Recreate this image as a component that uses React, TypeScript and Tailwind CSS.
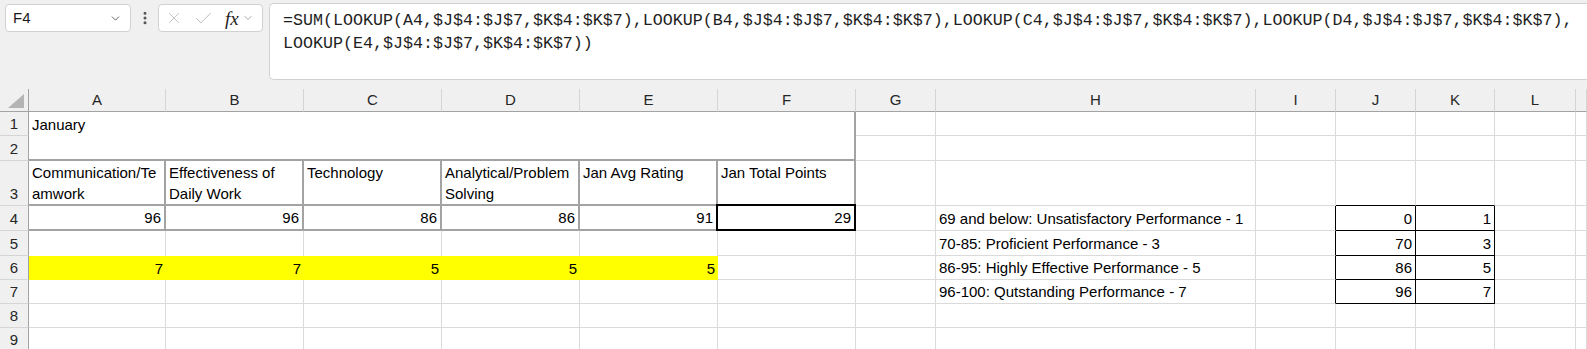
import { Check, ChevronDown, EllipsisVertical, X } from "lucide-react";

const COLS = ["A", "B", "C", "D", "E", "F", "G", "H", "I", "J", "K", "L", ""];
const ROWS = [1, 2, 3, 4, 5, 6, 7, 8, 9];

const LINE1 =
    "=SUM(LOOKUP(A4,$J$4:$J$7,$K$4:$K$7),LOOKUP(B4,$J$4:$J$7,$K$4:$K$7),LOOKUP(C4,$J$4:$J$7,$K$4:$K$7),LOOKUP(D4,$J$4:$J$7,$K$4:$K$7),";
const LINE2 = "LOOKUP(E4,$J$4:$J$7,$K$4:$K$7))";

type Cell = { text?: string[]; num?: boolean };

const data: Record<string, Cell> = {
    A1: { text: ["January"] },
    A3: { text: ["Communication/Te", "amwork"] },
    B3: { text: ["Effectiveness of", "Daily Work"] },
    C3: { text: ["Technology"] },
    D3: { text: ["Analytical/Problem", "Solving"] },
    E3: { text: ["Jan Avg Rating"] },
    F3: { text: ["Jan Total Points"] },
    A4: { text: ["96"], num: true },
    B4: { text: ["96"], num: true },
    C4: { text: ["86"], num: true },
    D4: { text: ["86"], num: true },
    E4: { text: ["91"], num: true },
    F4: { text: ["29"], num: true },
    H4: { text: ["69 and below: Unsatisfactory Performance - 1"] },
    H5: { text: ["70-85: Proficient Performance - 3"] },
    H6: { text: ["86-95: Highly Effective Performance - 5"] },
    H7: { text: ["96-100: Qutstanding Performance - 7"] },
    J4: { text: ["0"], num: true },
    K4: { text: ["1"], num: true },
    J5: { text: ["70"], num: true },
    K5: { text: ["3"], num: true },
    J6: { text: ["86"], num: true },
    K6: { text: ["5"], num: true },
    J7: { text: ["96"], num: true },
    K7: { text: ["7"], num: true },
    A6: { text: ["7"], num: true },
    B6: { text: ["7"], num: true },
    C6: { text: ["5"], num: true },
    D6: { text: ["5"], num: true },
    E6: { text: ["5"], num: true },
};

const plain = "border-r border-b border-r-[#dadada] border-b-[#dadada]";
const thick = "border-r-2 border-b-2 border-r-[#a3a3a3] border-b-[#a3a3a3]";

const cellLook = (c: string, r: number) => {
    const inBlock = ["A", "B", "C", "D", "E"].includes(c);
    if (r === 1 && inBlock) return "bg-white";
    if (r === 1 && c === "F") return "border-r-2 border-r-[#a3a3a3]";
    if (r === 2 && inBlock) return "border-b-2 border-b-[#a3a3a3]";
    if (r === 2 && c === "F") return thick;
    if ((r === 3 || r === 4) && (inBlock || c === "F")) return thick;
    if (r === 5 && inBlock) return "border-r border-r-[#dadada]";
    if (r === 6 && inBlock) return "bg-[#ffff00]";
    if (r === 3 && (c === "J" || c === "K")) return "border-r border-b border-r-[#dadada] border-b-black";
    if (r >= 4 && r <= 7 && c === "I") return "border-r border-b border-r-black border-b-[#dadada]";
    if (r >= 4 && r <= 7 && (c === "J" || c === "K")) return "border-r border-b border-r-black border-b-black";
    return plain;
};

const FormulaBar = () => (
    <div className="h-[89px] bg-[#f0f0f0] flex items-start">
        <div className="ml-[5px] mt-[4px] w-[126px] h-[28px] bg-white border border-[#d1d1d1] rounded-[4px] flex items-center justify-between pl-[7px] pr-[8px] text-[15px] text-[#1b1b1b]">
            <span>F4</span>
            <ChevronDown size={13} strokeWidth={1.5} className="text-[#444]" />
        </div>
        <div className="w-[27px] h-[28px] mt-[4px] flex items-center justify-center">
            <EllipsisVertical size={16} strokeWidth={2.5} className="text-[#555]" />
        </div>
        <div className="mt-[4px] w-[105px] h-[28px] bg-white border border-[#d1d1d1] rounded-[4px] flex items-center pl-[6px]">
            <X size={18} strokeWidth={1.1} className="text-[#b9b9b9]" />
            <Check size={21} strokeWidth={1.1} className="ml-[10px] text-[#b9b9b9]" />
            <span className="ml-[11px] font-['Liberation_Serif',serif] italic text-[19px] leading-none text-[#222]">fx</span>
            <ChevronDown size={12} strokeWidth={1.3} className="ml-[3px] text-[#777]" />
        </div>
        <div className="ml-[6px] mt-[3px] h-[77px] flex-1 bg-white border border-r-0 border-[#d1d1d1] rounded-l-[5px] pl-[13px] pt-[5px] font-['Liberation_Mono',monospace] text-[16.67px] leading-[23px] text-[#1e1e1e] whitespace-nowrap overflow-hidden">
            <div>{LINE1}</div>
            <div>{LINE2}</div>
        </div>
    </div>
);

export default function App() {
    return (
        <div className="w-[1587px] h-[349px] overflow-hidden bg-white font-['Liberation_Sans',Arial,sans-serif] text-[15px] text-black">
            <FormulaBar />
            <div className="grid grid-cols-[29px_137px_138px_138px_138px_138px_138px_80px_320px_80px_80px_79px_81px_1fr] grid-rows-[23px_24px_25px_45px_25px_25px_24px_24px_24px_24px]">
                <div className="bg-[#f0f0f0] border-r border-b border-r-[#a3a3a3] border-b-[#a3a3a3] flex items-end justify-end pr-[3px] pb-[3px]">
                    <svg width="17" height="14" viewBox="0 0 17 14">
                        <polygon points="16,0 16,14 0,14" fill="#b4b4b4" />
                    </svg>
                </div>
                {COLS.map((c, i) => (
                    <div
                        key={"h" + i}
                        className="bg-[#f0f0f0] border-r border-b border-r-[#d5d5d5] border-b-[#a3a3a3] flex items-center justify-center text-[15px] text-[#262626]"
                    >
                        {c}
                    </div>
                ))}
                {ROWS.map((r) => (
                    <>
                        <div
                            key={"r" + r}
                            className="bg-[#f0f0f0] border-r border-b border-r-[#a3a3a3] border-b-[#d5d5d5] flex items-end justify-center pb-[1px] text-[15px] text-[#262626] leading-[20px]"
                        >
                            {r}
                        </div>
                        {COLS.map((c, i) => {
                            const id = c + r;
                            const cell = data[id];
                            return (
                                <div
                                    key={id + i}
                                    className={`relative flex ${r === 3 ? "items-start pt-[1px]" : "items-end pb-[1px]"} ${cell?.num ? "justify-end pr-[3px]" : "justify-start pl-[3px]"} leading-[21px] whitespace-nowrap ${cellLook(c, r)}`}
                                >
                                    {cell?.text && (
                                        <div className="leading-[21px]">
                                            {cell.text.map((t, k) => (
                                                <div key={k}>{t}</div>
                                            ))}
                                        </div>
                                    )}
                                    {id === "F4" && (
                                        <div className="absolute -left-[2px] -top-[2px] right-[-2px] bottom-[-2px] border-2 border-black pointer-events-none" />
                                    )}
                                </div>
                            );
                        })}
                    </>
                ))}
            </div>
        </div>
    );
}
